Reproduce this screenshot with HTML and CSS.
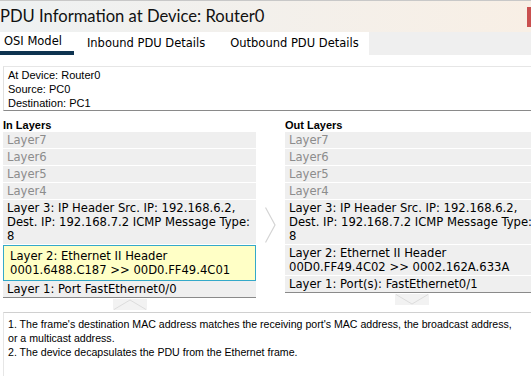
FILE: index.html
```html
<html lang="en">

<head>
    <meta charset="UTF-8">
    <title>PDU Information</title>
    <link rel="stylesheet" href="styles.css">
</head>

<body>
    <div class="titlebar">
        <span class="title">PDU Information at Device: Router0</span>
        <span class="close"></span>
    </div>
    <div class="tabs">
        <div class="tab active">OSI Model</div>
        <div class="tab">Inbound PDU Details</div>
        <div class="tab">Outbound PDU Details</div>
        <div class="tab-fill"></div>
    </div>

    <div class="info">
        <div>At Device: Router0</div>
        <div>Source: PC0</div>
        <div>Destination: PC1</div>
    </div>

    <div class="layers">
        <div class="col">
            <div class="col-title">In Layers</div>
            <div class="row dim">Layer7</div>
            <div class="row dim">Layer6</div>
            <div class="row dim">Layer5</div>
            <div class="row dim">Layer4</div>
            <div class="row">Layer 3: IP Header Src. IP: 192.168.6.2, Dest. IP: 192.168.7.2 ICMP Message Type: 8</div>
            <div class="row current">Layer 2: Ethernet II Header<br>0001.6488.C187 &gt;&gt; 00D0.FF49.4C01</div>
            <div class="row last">Layer 1: Port FastEthernet0/0</div>
            <div class="arrow">
                <svg width="34" height="11" viewBox="0 0 34 11">
                    <rect x="0" y="0" width="34" height="11" fill="#f2f2f2"/>
                    <polyline points="1,10.5 17,1 33,10.5" fill="none" stroke="#dcdcdc" stroke-width="1"/>
                </svg>
            </div>
        </div>

        <div class="mid">
            <svg width="11" height="36" viewBox="0 0 11 36">
                <polyline points="0.5,0.5 10,18 0.5,35.5" fill="none" stroke="#d4d4d4" stroke-width="1.2"/>
            </svg>
        </div>

        <div class="col">
            <div class="col-title">Out Layers</div>
            <div class="row dim">Layer7</div>
            <div class="row dim">Layer6</div>
            <div class="row dim">Layer5</div>
            <div class="row dim">Layer4</div>
            <div class="row">Layer 3: IP Header Src. IP: 192.168.6.2, Dest. IP: 192.168.7.2 ICMP Message Type: 8</div>
            <div class="row">Layer 2: Ethernet II Header<br>00D0.FF49.4C02 &gt;&gt; 0002.162A.633A</div>
            <div class="row last">Layer 1: Port(s): FastEthernet0/1</div>
            <div class="arrow">
                <svg width="34" height="11" viewBox="0 0 34 11">
                    <rect x="0" y="0" width="34" height="11" fill="#f2f2f2"/>
                    <polyline points="1,0.5 17,10 33,0.5" fill="none" stroke="#dcdcdc" stroke-width="1"/>
                </svg>
            </div>
        </div>
    </div>

    <div class="desc">
        <div>1. The frame's destination MAC address matches the receiving port's MAC address, the broadcast address, or a multicast address.</div>
        <div>2. The device decapsulates the PDU from the Ethernet frame.</div>
    </div>
</body>

</html>
```

FILE: styles.css
```css
body {
    margin: 0px;
    width: 531px;
    height: 376px;
    overflow: hidden;
    background: #FFF;
    color: #000;
}

.titlebar {
    height: 31px;
    border-top: 1px solid #c8c8c8;
    background: linear-gradient(to right, #eef1f2, #f8efe5);
    display: flex;
    align-items: center;
    justify-content: space-between;
}

.title {
    font-family: "Lato", sans-serif;
    font-size: 16.6px;
    color: #111;
    padding-bottom: 2px;
}

.close {
    width: 4px;
    height: 20px;
    background: #c9504f;
}

.tabs {
    display: flex;
    height: 23px;
    font-family: "DejaVu Sans", sans-serif;
    font-size: 11.5px;
}

.tab {
    padding: 0 12px 0 4px;
    line-height: 22px;
    background: #FFF;
    margin-right: 9px;
    white-space: nowrap;
}

.tab:nth-child(3) {
    margin-right: 0px;
    padding-right: 10px;
}

.tab.active {
    border-bottom: 4px solid #0e3350;
    line-height: 19px;
}

.tab-fill {
    flex: 1;
    background: #efefef;
}

.info {
    margin: 11px 0 0 3px;
    padding: 1px 4px 0 4px;
    border-top: 1px solid #e6e6e6;
    border-left: 1px solid #e0e0e0;
    border-bottom: 1px solid #8a8a8a;
    font-family: "Liberation Sans", Arial, sans-serif;
    font-size: 11px;
    line-height: 14px;
}

.layers {
    display: flex;
    margin: 8px 0 0 3px;
    font-family: "DejaVu Sans", sans-serif;
    font-size: 11.6px;
}

.col {
    width: 253px;
    flex-shrink: 0;
    display: flex;
    flex-direction: column;
}

.col-title {
    font-family: "Liberation Sans", Arial, sans-serif;
    font-weight: bold;
    font-size: 11px;
    line-height: 13px;
}

.row {
    background: #efefef;
    border-bottom: 1px solid #FFF;
    padding: 1px 0 1px 4px;
    line-height: 14px;
}

.row.dim {
    color: #8c8c8c;
}

.row.current {
    background: #ffffc6;
    border: 1px solid #34a9c9;
    padding: 3px 6px 3px 6px;
}

.row.last {
    border-bottom: 1px solid #8a8a8a;
}

.arrow {
    display: flex;
    justify-content: center;
    margin-top: 1px;
}

.mid {
    width: 29px;
    flex-shrink: 0;
    display: flex;
    justify-content: center;
    padding-top: 88px;
}

.desc {
    margin: 2px 0 0 3px;
    padding: 4px 19px 4px 4px;
    height: 70px;
    border-top: 1px solid #d0d0d0;
    border-left: 1px solid #e6e6e6;
    font-family: "Liberation Sans", Arial, sans-serif;
    font-size: 10.6px;
    line-height: 14px;
}
```
